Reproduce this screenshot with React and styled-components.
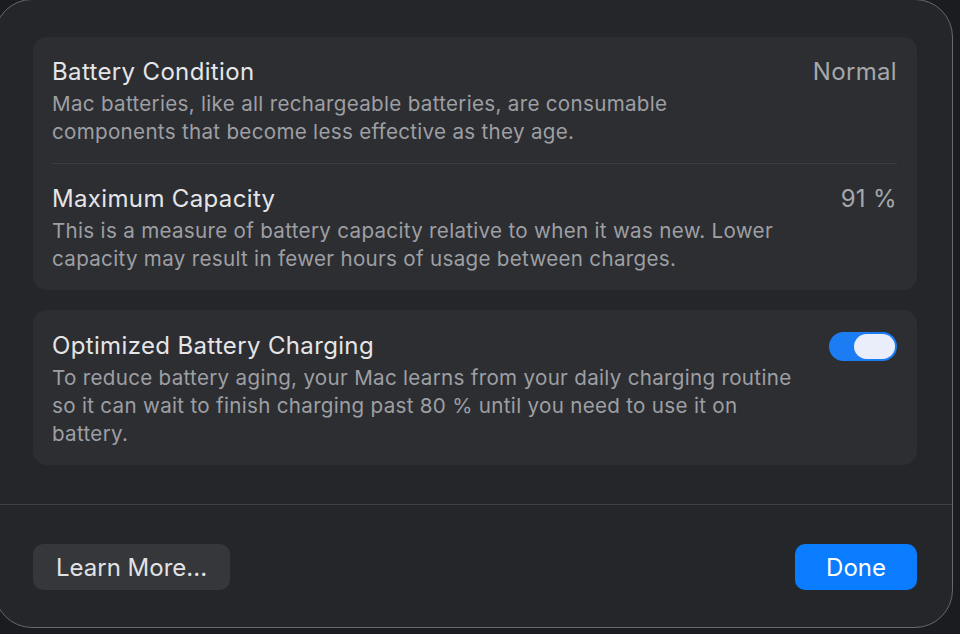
import React, { useState } from 'react'
import styled, { createGlobalStyle } from 'styled-components'

const GlobalStyle = createGlobalStyle`
    html, body {
        margin: 0;
        padding: 0;
        background: #1b1c1f;
        overflow: hidden;
    }

    * {
        box-sizing: border-box;
    }
`;

const Stage = styled.div`
    width: 960px;
    height: 634px;
    overflow: hidden;
    font-family: Inter, "Noto Sans", "Liberation Sans", sans-serif;
    -webkit-font-smoothing: antialiased;
`;

const Dialog = styled.div`
    display: flex;
    flex-direction: column;
    width: 959px;
    height: 629px;
    margin: -1px 0 0 -6px;
    background: #24262a;
    border: 1px solid #66686c;
    border-radius: 38px;
`;

const Body = styled.div`
    display: flex;
    flex-direction: column;
    gap: 20px;
    padding: 37px 35px 39px 38px;
`;

const Card = styled.section`
    display: flex;
    flex-direction: column;
    background: #2c2e32;
    border-radius: 14px;
    padding: 0 20px 0 19px;
`;

const Row = styled.div`
    display: flex;
    align-items: flex-start;
    justify-content: space-between;
    gap: 24px;
    padding: ${(props) => props.$pad || '20px 0 18px 0'};
    border-top: ${(props) => (props.$divided ? '1px solid #3b3d41' : 'none')};
`;

const TextCol = styled.div`
    display: flex;
    flex-direction: column;
    gap: 3px;
`;

const Title = styled.div`
    font-size: 24px;
    line-height: 30px;
    color: #e5e5e7;
    letter-spacing: 0.35px;
`;

const Desc = styled.p`
    margin: 0;
    font-size: 20.6px;
    line-height: 27.6px;
    letter-spacing: 0.3px;
    color: #9e9fa3;
`;

const Value = styled.div`
    font-size: 24px;
    line-height: 30px;
    letter-spacing: 0.35px;
    color: #a6a7ab;
    white-space: nowrap;
`;

const ToggleTrack = styled.button`
    flex: none;
    display: flex;
    align-items: center;
    justify-content: ${(props) => (props.$on ? 'flex-end' : 'flex-start')};
    width: 68px;
    height: 29px;
    margin-top: 1px;
    padding: 2px;
    border: none;
    border-radius: 15px;
    background: ${(props) => (props.$on ? '#1c7cf4' : '#4a4c50')};
    cursor: pointer;
`;

const ToggleKnob = styled.span`
    width: 41px;
    height: 25px;
    border-radius: 13px;
    background: #e9eefa;
`;

const Divider = styled.hr`
    margin: 0;
    border: none;
    border-top: 1px solid #3d3f43;
`;

const Footer = styled.div`
    display: flex;
    justify-content: space-between;
    align-items: center;
    padding: 39px 35px 37px 38px;
`;

const Button = styled.button`
    height: 46px;
    padding: 0 ${(props) => (props.$primary ? '31px' : '23px')};
    border: none;
    border-radius: 10px;
    font-family: inherit;
    font-size: 24px;
    letter-spacing: 0;
    color: ${(props) => (props.$primary ? '#ffffff' : '#e2e2e4')};
    background: ${(props) => (props.$primary ? '#0a7cff' : '#35373b')};
    cursor: pointer;
`;

const App = () => {
    const [optimized, setOptimized] = useState(true);

    return (
        <Stage>
            <GlobalStyle />
            <Dialog>
                <Body>
                    <Card>
                        <Row>
                            <TextCol>
                                <Title>Battery Condition</Title>
                                <Desc>Mac batteries, like all rechargeable batteries, are consumable components that become less effective as they age.</Desc>
                            </TextCol>
                            <Value>Normal</Value>
                        </Row>
                        <Row $divided>
                            <TextCol>
                                <Title>Maximum Capacity</Title>
                                <Desc>This is a measure of battery capacity relative to when it was new. Lower capacity may result in fewer hours of usage between charges.</Desc>
                            </TextCol>
                            <Value>91 %</Value>
                        </Row>
                    </Card>
                    <Card>
                        <Row $pad="21px 0 18px 0">
                            <TextCol>
                                <Title>Optimized Battery Charging</Title>
                                <Desc>To reduce battery aging, your Mac learns from your daily charging routine so it can wait to finish charging past 80 % until you need to use it on battery.</Desc>
                            </TextCol>
                            <ToggleTrack $on={optimized} onClick={() => setOptimized(!optimized)}>
                                <ToggleKnob />
                            </ToggleTrack>
                        </Row>
                    </Card>
                </Body>
                <Divider />
                <Footer>
                    <Button>Learn More...</Button>
                    <Button $primary>Done</Button>
                </Footer>
            </Dialog>
        </Stage>
    );
}

export default App;
